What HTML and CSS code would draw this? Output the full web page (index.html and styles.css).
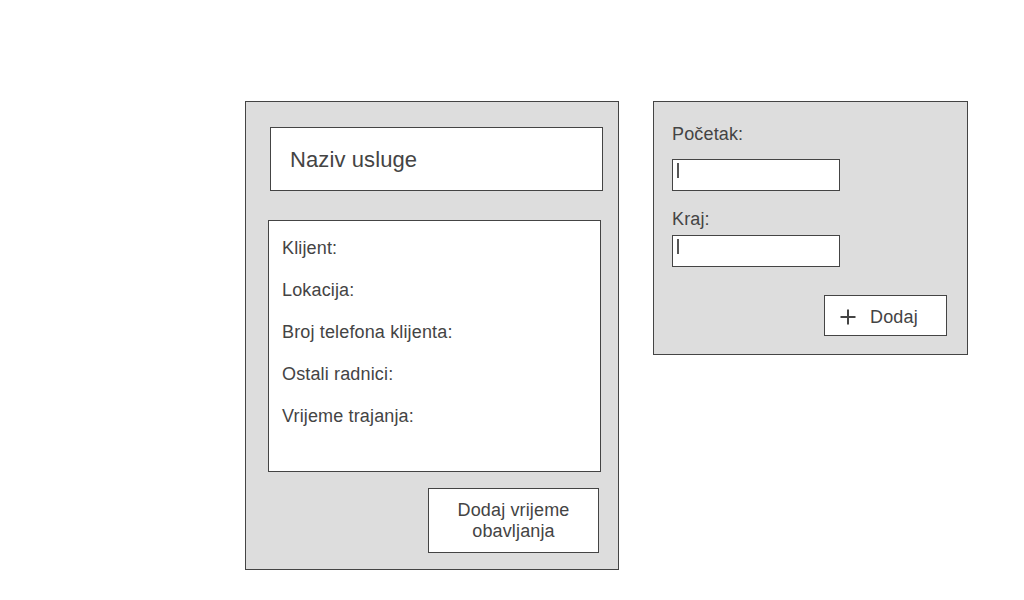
FILE: index.html
```html
<!DOCTYPE html>
<html lang="hr">
<head>
  <meta charset="UTF-8" />
  <title>Naziv usluge</title>
  <link rel="stylesheet" href="styles.css">
</head>
<body>
  <div class="page">
    <div class="panel service">
      <div class="title">Naziv usluge</div>

      <div class="details">
        <div class="row">Klijent:</div>
        <div class="row">Lokacija:</div>
        <div class="row">Broj telefona klijenta:</div>
        <div class="row">Ostali radnici:</div>
        <div class="row">Vrijeme trajanja:</div>
      </div>

      <button class="btn add-time">Dodaj vrijeme<br>obavljanja</button>
    </div>

    <div class="panel times">
      <label class="label">Početak:</label>
      <div class="field"><span class="caret"></span></div>

      <label class="label kraj">Kraj:</label>
      <div class="field close"><span class="caret"></span></div>

      <button class="btn add">
        <svg width="16" height="16" viewBox="0 0 16 16">
          <path d="M8 0.5V15.5M0.5 8H15.5" stroke="#444" stroke-width="2" fill="none" />
        </svg>
        <span>Dodaj</span>
      </button>
    </div>
  </div>
</body>
</html>
```

FILE: styles.css
```css
body {
  margin: 0;
  background: #fff;
  color: #444;
  font-family: 'Liberation Sans', Arial, sans-serif;
}

.page {
  display: flex;
  align-items: flex-start;
  gap: 34px;
  padding: 101px 0 0 245px;
}

.panel {
  box-sizing: border-box;
  background: #dddddd;
  border: 1px solid #444;
  display: flex;
  flex-direction: column;
}

.service {
  width: 374px;
  height: 469px;
  padding-top: 25px;
}

.title {
  box-sizing: border-box;
  width: 333px;
  height: 64px;
  margin-left: 24px;
  padding: 1px 0 0 19px;
  display: flex;
  align-items: center;
  background: #fff;
  border: 1px solid #444;
  font-size: 22px;
  letter-spacing: 0.1px;
}

.details {
  box-sizing: border-box;
  width: 333px;
  height: 252px;
  margin: 29px 0 0 22px;
  padding: 6px 0 0 13px;
  background: #fff;
  border: 1px solid #444;
}

.row {
  font-size: 18px;
  line-height: 42px;
  letter-spacing: 0.15px;
}

.btn {
  box-sizing: border-box;
  background: #fff;
  color: #444;
  border: 1px solid #444;
  font-family: 'Liberation Sans', Arial, sans-serif;
  font-size: 18px;
  letter-spacing: 0.15px;
  padding: 0;
  cursor: pointer;
}

.add-time {
  align-self: flex-end;
  width: 171px;
  height: 65px;
  margin: 16px 19px 0 0;
  line-height: 21px;
}

.times {
  width: 315px;
  padding: 22px 20px 18px 18px;
}

.label {
  font-size: 18px;
  line-height: 20px;
  letter-spacing: 0.15px;
}

.kraj {
  margin-top: 18px;
}

.field {
  box-sizing: border-box;
  width: 168px;
  height: 32px;
  margin-top: 15px;
  padding: 3px 0 0 4px;
  background: #fff;
  border: 1px solid #444;
}

.field.close {
  margin-top: 6px;
}

.caret {
  display: block;
  width: 0;
  height: 15px;
  border-left: 2px solid #555;
}

.add {
  align-self: flex-end;
  width: 123px;
  height: 41px;
  margin-top: 28px;
  display: flex;
  align-items: center;
  gap: 14px;
  padding: 3px 0 0 15px;
}
```
